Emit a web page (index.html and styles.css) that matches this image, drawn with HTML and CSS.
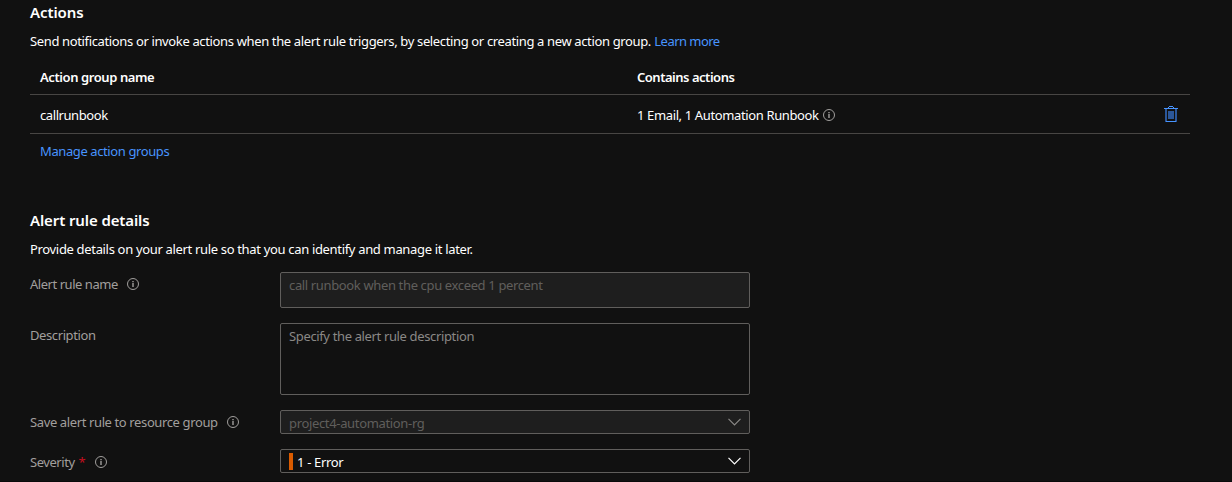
FILE: index.html
```html
<!DOCTYPE html>
<html lang="en">
<head>
<meta charset="utf-8">
<title>Alert rule</title>
<link rel="stylesheet" href="styles.css">
</head>
<body>
<svg class="defs" width="0" height="0">
  <symbol id="info" viewBox="0 0 12 12"><circle cx="6" cy="6" r="5.5" fill="none" stroke="currentColor"/><path d="M5.3 3h1.4v1.2H5.3zM5.3 5h1.4v4H5.3z" fill="currentColor"/></symbol>
  <symbol id="chevron" viewBox="0 0 13 8"><path d="M.5 .8l6 6 6-6" fill="none" stroke="currentColor" stroke-width="1.2"/></symbol>
</svg>
<main class="page">
  <section class="actions">
    <h2 class="title"><span class="t-actions">Actions</span></h2>
    <p class="lead"><span class="t-send">Send notifications or invoke actions when the alert rule triggers, by selecting or creating a new action group.</span> <a class="link t-learn">Learn more</a></p>
    <div class="table">
      <div class="row head"><span class="t-agn">Action group name</span><span class="t-contains">Contains actions</span></div>
      <div class="row"><span class="t-call">callrunbook</span><span class="contains"><span class="t-email">1 Email, 1 Automation Runbook</span><svg class="info cell-info"><use href="#info"/></svg></span>
        <svg class="trash" viewBox="0 0 14 16"><path d="M1 3h12v13H1z" fill="#2b579a"/><path d="M3 3h8v12H3z" fill="#111"/><path d="M4 5h6v8H4z" fill="#2b579a"/><path d="M0 2h14v1H0zM2 15h10v1H2zM5 0h4v1H5zM4 1h1v1H4zM9 1h1v1H9z" fill="#4894fe"/></svg>
      </div>
    </div>
    <a class="link manage"><span class="t-manage">Manage action groups</span></a>
  </section>
  <section class="details">
    <h2 class="title"><span class="t-details">Alert rule details</span></h2>
    <p class="lead"><span class="t-provide">Provide details on your alert rule so that you can identify and manage it later.</span></p>
    <div class="form">
      <div class="label"><span class="t-name">Alert rule name</span><svg class="info"><use href="#info"/></svg></div>
      <div class="field disabled name"><span class="t-value">call runbook when the cpu exceed 1 percent</span></div>
      <div class="label"><span class="t-desc">Description</span></div>
      <div class="field area"><span class="t-specify">Specify the alert rule description</span></div>
      <div class="label"><span class="t-save">Save alert rule to resource group</span><svg class="info"><use href="#info"/></svg></div>
      <div class="field select disabled"><span class="t-project">project4-automation-rg</span><svg class="chevron"><use href="#chevron"/></svg></div>
      <div class="label last"><span class="t-sev">Severity</span><span class="required">*</span><svg class="info"><use href="#info"/></svg></div>
      <div class="field select severity"><i class="bar"></i><span class="t-error">1 - Error</span><svg class="chevron"><use href="#chevron"/></svg></div>
    </div>
  </section>
</main>
</body>
</html>
```
FILE: styles.css
```css
* { box-sizing: border-box; }
body { margin: 0; background: #111; color: #fff; font: 13px/18px "Noto Sans", sans-serif; overflow: hidden; }
.defs { display: block; height: 0; }
.page { height: 482px; padding: 0 30px; white-space: nowrap; border-bottom: 1px solid #0a0a0a; }
.title { margin: 0; font-size: 15px; line-height: 20px; font-weight: 600; }
.lead { margin: 0; }
.actions { height: 210px; padding-top: 2px; }
.actions .lead { margin-top: 10px; }
.link { color: #4894fe; }
.table { width: 1160px; margin-top: 10px; }
.row { display: grid; grid-template-columns: 597px 1fr 14px; align-items: center; height: 39px; padding: 1px 12px 0 10px; border-bottom: 1px solid #484644; }
.head { height: 35px; padding-top: 0; font-weight: 600; }
.contains { display: flex; align-items: center; }
.info { width: 12px; height: 12px; margin-left: 9px; color: #a19f9d; }
.cell-info { margin-left: 4px; }
.trash { width: 14px; height: 16px; margin-top: -2px; }
.manage { display: block; margin: 8px 0 0 10px; }
.details .lead { margin-top: 10px; }
.form { display: grid; grid-template-columns: 250px 470px; grid-template-rows: 36px 72px 24px 24px; row-gap: 15px; margin-top: 14px; }
.label { display: flex; align-items: center; height: 24px; color: #a19f9d; }
.last { height: 26px; }
.field { border: 1px solid #605e5c; border-radius: 2px; padding: 3px 8px; color: #8a8886; }
.disabled { background: #1e1e1e; color: #605e5c; }
.select { display: flex; align-items: center; padding: 0 8px; }
.select span { padding-top: 2px; }
.severity { color: #fff; }
.required { margin-left: 4px; color: #c50f1f; }
.chevron { width: 13px; height: 8px; margin-left: auto; color: #8a8886; }
.severity .chevron { color: #fff; }
.bar { width: 4px; height: 17px; margin: 1px 4px 0 0; background: #da5b00; }

/* Tracking per text run */
.t-actions { letter-spacing: -.1px; }
.t-send { letter-spacing: -.36px; }
.t-learn { letter-spacing: -.55px; }
.t-agn { letter-spacing: -.41px; }
.t-contains { letter-spacing: -.48px; }
.t-call { letter-spacing: -.42px; }
.t-email { letter-spacing: -.37px; }
.t-manage { letter-spacing: -.4px; }
.t-details { letter-spacing: -.11px; }
.t-provide { letter-spacing: -.33px; }
.t-name { letter-spacing: -.46px; }
.t-value { letter-spacing: -.36px; }
.t-desc { letter-spacing: -.4px; }
.t-specify { letter-spacing: -.36px; }
.t-save { letter-spacing: -.38px; }
.t-project { letter-spacing: -.34px; }
.t-sev { letter-spacing: -.45px; }
.t-error { letter-spacing: -.34px; }
```
